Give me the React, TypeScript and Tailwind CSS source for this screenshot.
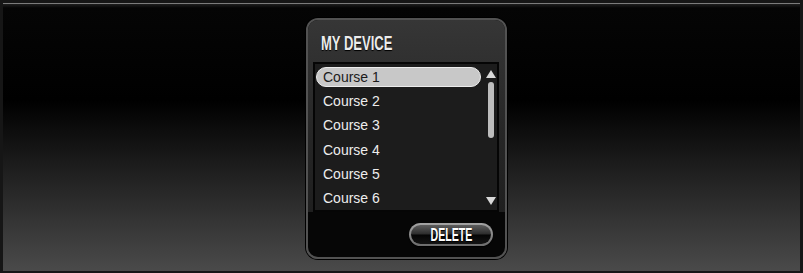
import React from 'react';

const courses = ['Course 1', 'Course 2', 'Course 3', 'Course 4', 'Course 5', 'Course 6'];

export default function App() {
  const selected = 0;

  return (
    <div className="w-[803px] h-[273px] bg-[#161616] pt-[3px] px-[3px] pb-[2px]">
      <div className="h-full border-t border-[#7c7c7c] bg-[linear-gradient(to_bottom,#1e1e1e_0px,#050505_4px,#000_36%,#4a4a4a_100%)] pl-[303px] pt-[14px]">
        {/* device panel */}
        <div className="w-[201px] h-[241px] rounded-[12px] border-2 border-[#525252] shadow-[0_0_0_1px_#000] overflow-hidden flex flex-col">
          <div className="bg-[linear-gradient(to_bottom,#363636,#262626_60%,#1f1f1f)] pl-[5px] pr-[6px]">
            <div className="h-[42px] pl-[8px] pt-[12px]">
              <span className="inline-block origin-left scale-x-[0.62] text-[21px] leading-[21px] font-bold text-[#ececec] [font-family:'Liberation_Sans_Narrow','Liberation_Sans',sans-serif] [text-shadow:0_1px_1px_#000]">
                MY DEVICE
              </span>
            </div>

            {/* list */}
            <div className="w-[186px] h-[150px] border-2 border-[#050505] bg-[#1c1c1c] shadow-[0_1px_0_#5a5a5a] flex">
              <div className="w-[170px] pt-[1px]">
                {courses.map((c, i) => (
                  <div key={c} className="h-[24.3px] flex items-center">
                    {i === selected ? (
                      <div className="ml-[1px] w-[165px] h-[20px] rounded-full bg-[#c8c8c8] border border-[#ececec] pl-[6px] flex items-center text-[14px] text-[#1b1b1b] [font-family:'Liberation_Sans',Arial,sans-serif]">
                        {c}
                      </div>
                    ) : (
                      <div className="pl-[8px] text-[14px] text-[#ededed] [font-family:'Liberation_Sans',Arial,sans-serif]">
                        {c}
                      </div>
                    )}
                  </div>
                ))}
              </div>
              <div className="w-[12px] flex flex-col items-center pt-[6px] pb-[5px]">
                <svg width="10" height="8" viewBox="0 0 10 8">
                  <polygon points="5,0 10,8 0,8" fill="#d8d8d8" />
                </svg>
                <div className="mt-[4px] w-[6px] h-[56px] rounded-full bg-[#bdbdbd]" />
                <div className="flex-1" />
                <svg width="10" height="8" viewBox="0 0 10 8">
                  <polygon points="0,0 10,0 5,8" fill="#d8d8d8" />
                </svg>
              </div>
            </div>
          </div>

          {/* bottom bar */}
          <div className="flex-1 bg-[#060606] flex justify-end items-start pt-[11px] pr-[12px]">
            <button className="w-[84px] h-[23px] rounded-full p-[2px] bg-[linear-gradient(to_bottom,#a4a4a4,#6c6c6c)] shadow-[0_1px_1px_#000]">
              <div className="w-full h-full rounded-full bg-[linear-gradient(to_bottom,#5e5e5e_0%,#2c2c2c_48%,#050505_52%,#141414_100%)] flex items-center justify-center">
                <span className="inline-block scale-x-[0.56] text-[19px] leading-[19px] font-bold text-white [font-family:'Liberation_Sans_Narrow','Liberation_Sans',sans-serif] [text-shadow:0_1px_1px_#000]">
                  DELETE
                </span>
              </div>
            </button>
          </div>
        </div>
      </div>
    </div>
  );
}
